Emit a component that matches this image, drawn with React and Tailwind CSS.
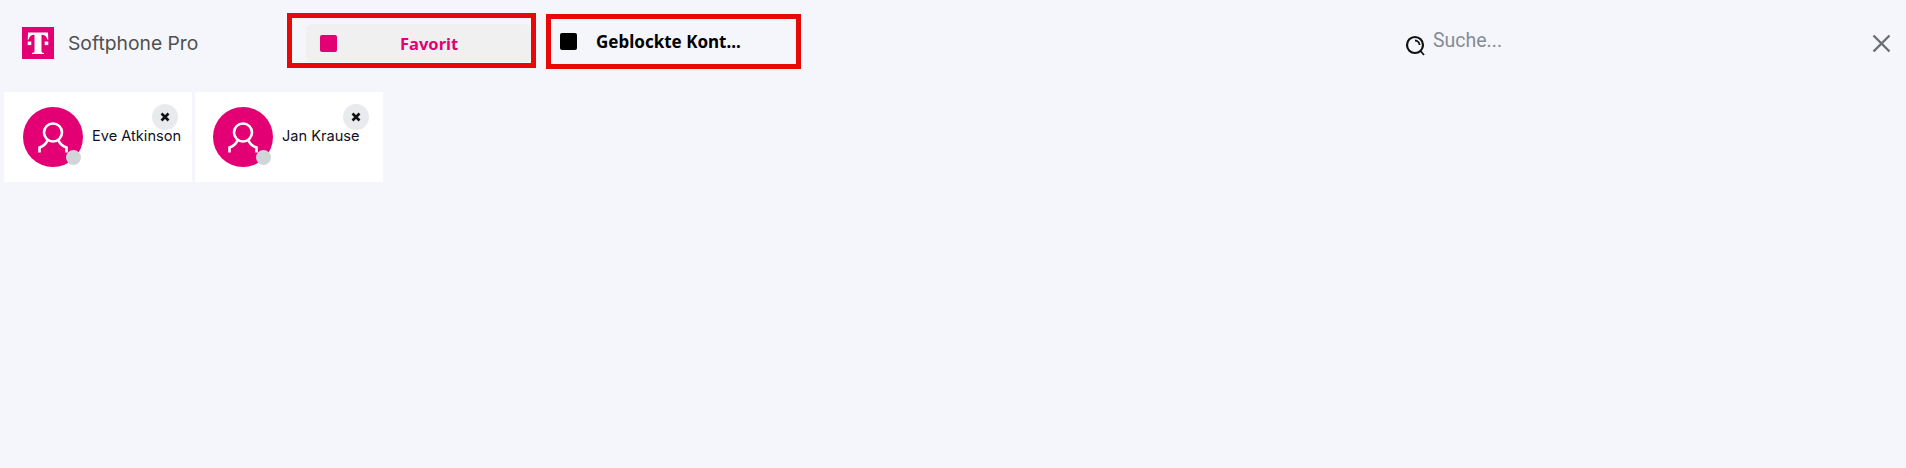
import React from "react";

function Logo() {
  return (
    <svg width="32" height="32" viewBox="0 0 32 32" className="shrink-0">
      <rect width="32" height="32" fill="#e20074" />
      <path d="M6 5.5H26L26.3 12.5H25.2C24.8 9.5 23 7.8 19.5 7.7V23.5C19.5 25.5 20.2 25.8 22 25.9V27H10V25.9C11.8 25.8 12.5 25.5 12.5 23.5V7.7C9 7.8 7.2 9.5 6.8 12.5H5.7Z" fill="#fff" />
      <rect x="5.7" y="14.5" width="3.6" height="3.6" fill="#fff" />
      <rect x="22.7" y="14.5" width="3.6" height="3.6" fill="#fff" />
    </svg>
  );
}

function Person() {
  return (
    <svg width="34" height="34" viewBox="0 0 34 34" fill="none" stroke="#fff" strokeWidth="2.6">
      <circle cx="17" cy="12.5" r="9" />
      <path d="M11.5 20.5C9.5 25 6.5 26.5 3.5 27.5V32.5M22.5 20.5C24.5 25 27.5 26.5 30.5 27.5V32.5" />
    </svg>
  );
}

function Card({ name, className }) {
  return (
    <div className={`relative flex h-[90px] w-[188px] items-center bg-white ${className}`}>
      <div className="relative flex h-[60px] w-[60px] shrink-0 items-center justify-center rounded-full bg-[#e20074]">
        <Person />
        <span className="absolute left-[43px] top-[43px] h-[15px] w-[15px] rounded-full bg-[#d0d5da]" />
      </div>
      <span className="mb-[2px] ml-[9px] whitespace-nowrap font-['Inter',sans-serif] text-[14.6px] leading-5 text-[#101020]">{name}</span>
      <span className="absolute right-[14px] top-[12px] flex h-[26px] w-[26px] items-center justify-center rounded-full bg-[#e8eaed]">
        <svg width="10" height="10" viewBox="0 0 10 10" stroke="#111" strokeWidth="2.6">
          <path d="M1.5 1.5L8.5 8.5M8.5 1.5L1.5 8.5" />
        </svg>
      </span>
    </div>
  );
}

export default function App() {
  return (
    <div className="h-[468px] w-full overflow-hidden bg-[#f4f6fb] pl-1 font-['Noto_Sans',sans-serif]">
      <header className="flex h-[92px] items-start pl-[18px]">
        <div className="mt-[27px] flex w-[265px] items-center">
          <Logo />
          <span className="ml-[14px] font-['Inter',sans-serif] text-[19.3px] leading-8 text-[#505050]">Softphone Pro</span>
        </div>
        <div className="mt-[13px] h-[55px] w-[249px] border-[5px] border-[#e80808] pl-[14px] pt-[6px]">
          <div className="flex h-[38px] w-[225px] items-center rounded-md bg-[#f0f0f0] pl-[14px]">
            <span className="h-[17px] w-[17px] rounded-[2px] bg-[#e20074]" />
            <span className="ml-[63px] mt-[2px] text-[16.5px] font-bold text-[#e20074]">Favorit</span>
          </div>
        </div>
        <div className="ml-[10px] mt-[14px] flex h-[55px] w-[255px] items-center border-[5px] border-[#e80808] pl-[9px]">
          <span className="mb-[1px] h-[17px] w-[17px] rounded-[2px] bg-black" />
          <span className="ml-[19px] mt-[1px] whitespace-nowrap text-[17px] font-bold text-black">Geblockte Kont...</span>
        </div>
        <div className="ml-[604px] mt-[30px] flex items-start">
          <svg className="mt-[5px]" width="21" height="21" viewBox="0 0 21 21" fill="none" stroke="#111" strokeWidth="2.2">
            <circle cx="10" cy="10" r="8" />
            <path d="M15.5 16L19 20M10 5.5A4.5 4.5 0 0 1 14.5 10" strokeWidth="1.8" />
          </svg>
          <span className="ml-[7px] font-['Roboto',sans-serif] text-[19.5px] leading-[22px] text-[#868c95]">Suche...</span>
        </div>
        <svg className="ml-auto mr-[14px] mt-[33px]" width="21" height="21" viewBox="0 0 21 21" stroke="#6b6f73" strokeWidth="2.4">
          <path d="M2.5 2.5L18.5 18.5M18.5 2.5L2.5 18.5" />
        </svg>
      </header>
      <div className="flex gap-[3px]">
        <Card name="Eve Atkinson" className="pl-[19px]" />
        <Card name="Jan Krause" className="pl-[18px]" />
      </div>
    </div>
  );
}
